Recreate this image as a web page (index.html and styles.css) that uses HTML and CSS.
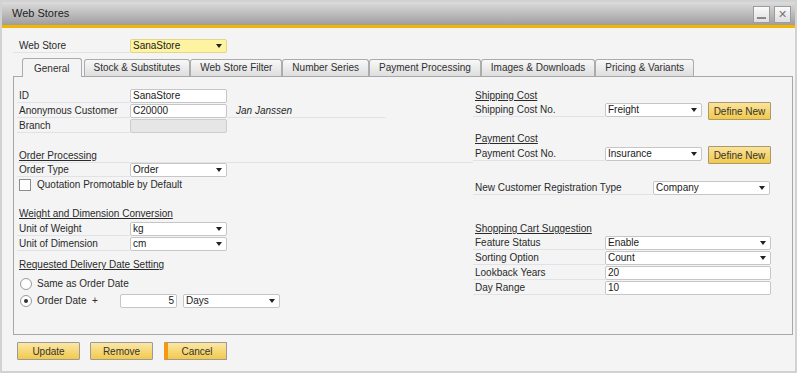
FILE: index.html
```html
<!DOCTYPE html>
<html lang="en">
<head>
    <meta charset="UTF-8">
    <title>Web Stores</title>
    <link rel="stylesheet" href="styles.css">
</head>
<body>
    <div class="window">
        <div class="titlebar">
            <span class="title">Web Stores</span>
            <div class="wbtns">
                <span class="wbtn min"></span>
                <span class="wbtn close">&#x2715;</span>
            </div>
        </div>

        <div class="content">
            <div class="row store-row">
                <span class="lbl">Web Store</span>
                <span class="field select yellow">SanaStore</span>
            </div>

            <div class="tabs">
                <span class="tab active">General</span>
                <span class="tab">Stock &amp; Substitutes</span>
                <span class="tab">Web Store Filter</span>
                <span class="tab">Number Series</span>
                <span class="tab">Payment Processing</span>
                <span class="tab">Images &amp; Downloads</span>
                <span class="tab">Pricing &amp; Variants</span>
            </div>

            <div class="panel">
                <div class="col left">
                    <div class="row"><span class="lbl">ID</span><span class="field">SanaStore</span></div>
                    <div class="row"><span class="lbl">Anonymous Customer</span><span class="field">C20000</span><span class="extra">Jan Janssen</span></div>
                    <div class="row"><span class="lbl">Branch</span><span class="field disabled"></span></div>

                    <div class="heading line order-head"><u>Order Processing</u></div>
                    <div class="row"><span class="lbl">Order Type</span><span class="field select">Order</span></div>
                    <div class="row check-row"><span class="checkbox"></span>Quotation Promotable by Default</div>

                    <div class="heading weight-head"><u>Weight and Dimension Conversion</u></div>
                    <div class="row"><span class="lbl">Unit of Weight</span><span class="field select">kg</span></div>
                    <div class="row"><span class="lbl">Unit of Dimension</span><span class="field select">cm</span></div>

                    <div class="heading delivery-head"><u>Requested Delivery Date Setting</u></div>
                    <div class="radio-row first"><span class="radio"></span>Same as Order Date</div>
                    <div class="radio-row"><span class="radio on"></span><span class="radio-text">Order Date</span><span class="plus">+</span><span class="field days-num">5</span><span class="field select days">Days</span></div>
                </div>

                <div class="col right">
                    <div class="heading"><u>Shipping Cost</u></div>
                    <div class="row"><span class="lbl">Shipping Cost No.</span><span class="field select">Freight</span><button class="define">Define New</button></div>

                    <div class="heading payment-head"><u>Payment Cost</u></div>
                    <div class="row"><span class="lbl">Payment Cost No.</span><span class="field select">Insurance</span><button class="define">Define New</button></div>

                    <div class="row registration"><span class="lbl wide">New Customer Registration Type</span><span class="field select mid">Company</span></div>

                    <div class="heading cart-head"><u>Shopping Cart Suggestion</u></div>
                    <div class="row"><span class="lbl">Feature Status</span><span class="field select long">Enable</span></div>
                    <div class="row"><span class="lbl">Sorting Option</span><span class="field select long">Count</span></div>
                    <div class="row"><span class="lbl">Lookback Years</span><span class="field long">20</span></div>
                    <div class="row"><span class="lbl">Day Range</span><span class="field long">10</span></div>
                </div>
            </div>

            <div class="actions">
                <button class="btn">Update</button>
                <button class="btn">Remove</button>
                <button class="btn cancel">Cancel</button>
            </div>
        </div>
    </div>
</body>
</html>
```

FILE: styles.css
```css
* {
    box-sizing: border-box;
}
body {
    margin: 0;
    background: #fff;
    font-family: "Liberation Sans", Arial, sans-serif;
    font-size: 10px;
    color: #2a2a2a;
}
.window {
    width: 797px;
    height: 373px;
    border: 2px solid #d2d2d2;
    background: #f4f4f4;
}
.titlebar {
    height: 26px;
    background: linear-gradient(#dcdcdc, #9e9e9e);
    border-bottom: 3px solid #f4b400;
    display: flex;
    justify-content: space-between;
    align-items: flex-start;
}
.title {
    font-size: 11px;
    line-height: 23px;
    padding-left: 10px;
    color: #1e1e1e;
}
.wbtns {
    display: flex;
    gap: 4px;
    padding: 4px 4px 0 0;
}
.wbtn {
    width: 17px;
    height: 17px;
    border: 1px solid #9c9c9c;
    background: linear-gradient(#fafafa, #dedede);
    color: #777;
    font-size: 11px;
    line-height: 15px;
    text-align: center;
    position: relative;
}
.wbtn.min::after {
    content: "";
    position: absolute;
    left: 3px;
    right: 3px;
    bottom: 3px;
    height: 2px;
    background: #888;
}
.content {
    padding: 11px 0 0 11px;
}

/* rows and fields */
.row {
    display: flex;
    height: 15px;
    align-items: flex-start;
}
.lbl {
    width: 113px;
    height: 14px;
    line-height: 14px;
    padding-left: 2px;
    border-bottom: 1px solid #dfe3e8;
    white-space: nowrap;
}
.store-row .lbl {
    width: 117px;
    padding-left: 6px;
}
.field {
    width: 97px;
    height: 14px;
    line-height: 12px;
    padding-left: 2px;
    background: #fff;
    border: 1px solid #c6c6c6;
    border-radius: 2px;
    color: #1a1a1a;
    position: relative;
    white-space: nowrap;
}
.field.yellow {
    background: #fdf3a0;
    border-color: #e2d68a;
}
.field.disabled {
    background: #e6e6e6;
    border-color: #cdcdcd;
}
.select::after {
    content: "";
    position: absolute;
    right: 4px;
    top: 4px;
    border-left: 3.5px solid transparent;
    border-right: 3.5px solid transparent;
    border-top: 4px solid #222;
}
.extra {
    width: 159px;
    height: 14px;
    line-height: 14px;
    padding-left: 9px;
    border-bottom: 1px solid #dfe3e8;
    font-style: italic;
}
.heading {
    height: 14px;
    line-height: 13px;
    padding-left: 2px;
}
.heading.line {
    border-bottom: 1px solid #dfe3e8;
}

/* tabs */
.tabs {
    display: flex;
    align-items: flex-end;
    height: 18px;
    margin-top: 4px;
    padding-left: 9px;
}
.tab {
    height: 17px;
    line-height: 16px;
    padding: 0 9px;
    background: linear-gradient(#f8f8f8, #dedede);
    border: 1px solid #ababab;
    border-bottom: none;
    border-radius: 3px 3px 0 0;
    color: #303030;
    white-space: nowrap;
}
.tab.active {
    height: 19px;
    line-height: 19px;
    padding: 0 11px;
    margin-bottom: -1px;
    margin-right: 2px;
    background: #f4f4f4;
    position: relative;
}
.panel {
    display: flex;
    height: 259px;
    margin-right: 2px;
    border: 1px solid #a8a8a8;
    padding-left: 3px;
}
.col.left {
    width: 456px;
    padding-top: 12px;
}
.col.right {
    width: 310px;
    padding-top: 12px;
}
.right .lbl {
    width: 132px;
}
.order-head {
    margin-top: 15px;
}
.check-row {
    align-items: center;
    height: 14px;
    line-height: 14px;
}
.checkbox {
    width: 12px;
    height: 12px;
    margin: 0 6px 0 2px;
    background: #fff;
    border: 1px solid #8c8c8c;
}
.weight-head {
    margin-top: 15px;
    margin-bottom: 1px;
}
.delivery-head {
    margin-top: 6px;
    margin-bottom: 3px;
}
.radio-row {
    display: flex;
    align-items: center;
    height: 17px;
}
.radio {
    width: 12px;
    height: 12px;
    margin: 0 5px 0 3px;
    border: 1px solid #9a9a9a;
    border-radius: 50%;
    background: #fff;
    position: relative;
}
.radio.on::after {
    content: "";
    position: absolute;
    left: 3px;
    top: 3px;
    width: 4px;
    height: 4px;
    border-radius: 50%;
    background: #333;
}
.radio-text {
    width: 55px;
}
.plus {
    width: 28px;
}
.days-num {
    width: 57px;
    text-align: right;
    padding-right: 2px;
}
.days {
    margin-left: 6px;
}

/* right column */
.define {
    width: 63px;
    height: 18px;
    margin: -1px 0 0 6px;
    padding: 0;
    font: inherit;
    color: #333;
    background: linear-gradient(#fbe39a, #f2c94a);
    border: 1px solid #a89a70;
    border-radius: 1px;
}
.payment-head {
    margin-top: 14px;
    margin-bottom: 1px;
}
.registration {
    margin-top: 19px;
}
.lbl.wide {
    width: 180px;
}
.field.mid {
    width: 117px;
}
.field.long {
    width: 166px;
}
.cart-head {
    margin-top: 26px;
}

/* bottom buttons */
.actions {
    display: flex;
    gap: 10px;
    margin: 7px 0 0 4px;
}
.btn {
    width: 63px;
    height: 18px;
    padding: 0;
    font: inherit;
    color: #333;
    background: linear-gradient(#fbe7a6, #f2c94c);
    border: 1px solid #9a9a9a;
    border-radius: 1px;
}
.btn.cancel {
    margin-left: 1px;
    border-left: 4px solid #f39a12;
}
```
